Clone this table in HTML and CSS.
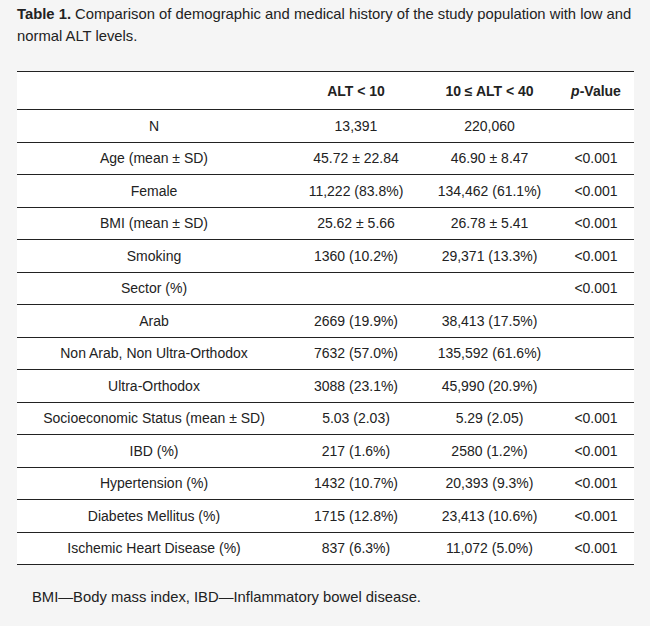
FILE: index.html
```html
<!DOCTYPE html>
<html lang="en">
<head>
<meta charset="utf-8">
<title>Table 1</title>
<link rel="stylesheet" href="styles.css">
</head>
<body>
<div class="page">
  <p class="caption"><b>Table 1.</b> Comparison of demographic and medical history of the study population with low and normal ALT levels.</p>
  <table class="data">
    <colgroup>
      <col class="c1"><col class="c2"><col class="c3"><col class="c4">
    </colgroup>
    <thead>
      <tr><th></th><th>ALT &lt; 10</th><th>10 ≤ ALT &lt; 40</th><th><i>p</i>-Value</th></tr>
    </thead>
    <tbody>
      <tr><td>N</td><td>13,391</td><td>220,060</td><td></td></tr>
      <tr><td>Age (mean ± SD)</td><td>45.72 ± 22.84</td><td>46.90 ± 8.47</td><td>&lt;0.001</td></tr>
      <tr><td>Female</td><td>11,222 (83.8%)</td><td>134,462 (61.1%)</td><td>&lt;0.001</td></tr>
      <tr><td>BMI (mean ± SD)</td><td>25.62 ± 5.66</td><td>26.78 ± 5.41</td><td>&lt;0.001</td></tr>
      <tr><td>Smoking</td><td>1360 (10.2%)</td><td>29,371 (13.3%)</td><td>&lt;0.001</td></tr>
      <tr><td>Sector (%)</td><td></td><td></td><td>&lt;0.001</td></tr>
      <tr><td>Arab</td><td>2669 (19.9%)</td><td>38,413 (17.5%)</td><td></td></tr>
      <tr><td>Non Arab, Non Ultra-Orthodox</td><td>7632 (57.0%)</td><td>135,592 (61.6%)</td><td></td></tr>
      <tr><td>Ultra-Orthodox</td><td>3088 (23.1%)</td><td>45,990 (20.9%)</td><td></td></tr>
      <tr><td>Socioeconomic Status (mean ± SD)</td><td>5.03 (2.03)</td><td>5.29 (2.05)</td><td>&lt;0.001</td></tr>
      <tr><td>IBD (%)</td><td>217 (1.6%)</td><td>2580 (1.2%)</td><td>&lt;0.001</td></tr>
      <tr><td>Hypertension (%)</td><td>1432 (10.7%)</td><td>20,393 (9.3%)</td><td>&lt;0.001</td></tr>
      <tr><td>Diabetes Mellitus (%)</td><td>1715 (12.8%)</td><td>23,413 (10.6%)</td><td>&lt;0.001</td></tr>
      <tr><td>Ischemic Heart Disease (%)</td><td>837 (6.3%)</td><td>11,072 (5.0%)</td><td>&lt;0.001</td></tr>
    </tbody>
  </table>
  <p class="foot">BMI—Body mass index, IBD—Inflammatory bowel disease.</p>
</div>
</body>
</html>
```

FILE: styles.css
```css
html, body {
  margin: 0;
  padding: 0;
  background: #f5f5f5;
}
body {
  font-family: Arial, "Liberation Sans", sans-serif;
  font-size: 14px;
  color: #222;
}
.page {
  width: 617px;
  margin-left: 17px;
  padding-top: 4px;
}
.caption {
  margin: 0;
  font-size: 14.8px;
  line-height: 21.5px;
}
.caption b {
  font-weight: bold;
}
.data {
  margin-top: 24px;
  width: 617px;
  border-collapse: collapse;
  background: #fff;
  table-layout: fixed;
}
.c1 { width: 274px; }
.c2 { width: 130px; }
.c3 { width: 137px; }
.c4 { width: 76px; }
.data th, .data td {
  padding: 0;
  text-align: center;
  line-height: 16px;
  border-top: 1px solid #222;
}
.data th {
  font-weight: bold;
  height: 37px;
}
.data td {
  height: 31.5px;
}
.data tbody tr:last-child td {
  border-bottom: 1px solid #222;
}
.foot {
  margin: 22px 0 0 15px;
  font-size: 14.8px;
  line-height: 21.5px;
}
```
